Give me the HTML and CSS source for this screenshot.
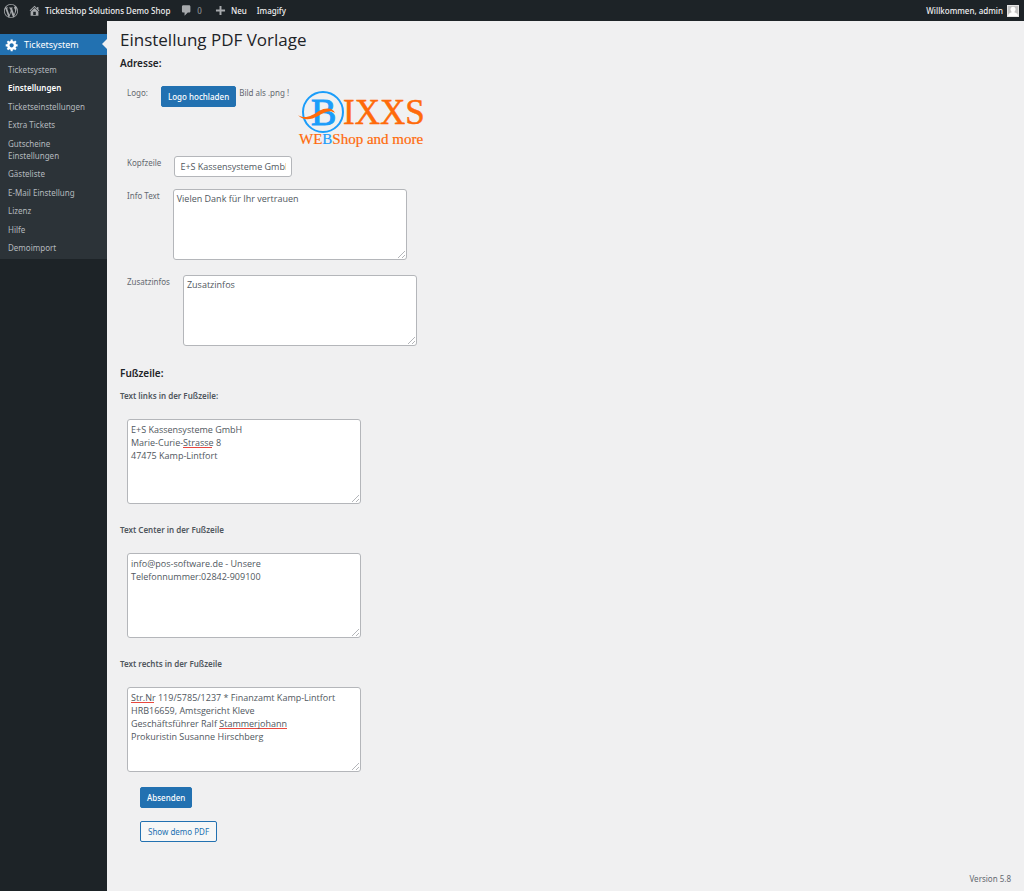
FILE: index.html
```html
<!DOCTYPE html>
<html lang="de">
<head>
<meta charset="utf-8">
<title>Einstellung PDF Vorlage</title>
<link rel="stylesheet" href="styles.css">
</head>
<body>
<header class="adminbar">
  <a class="bar-item" href="#" aria-label="WordPress">
    <svg class="icon-wp" viewBox="0 0 20 20"><path fill="currentColor" d="M20 10c0-5.51-4.49-10-10-10S0 4.49 0 10s4.480 10 10 10c5.510 0 10-4.490 10-10zM7.780 15.370L4.370 6.220c.550-.020 1.170-.080 1.170-.080.500-.060.440-1.130-.060-1.110 0 0-1.450.110-2.370.110-.180 0-.370 0-.580-.010C4.120 2.690 6.870 1.110 10 1.110c2.330 0 4.450.870 6.050 2.340-.680-.110-1.650.390-1.650 1.580 0 .740.450 1.360.900 2.100.350.610.550 1.360.550 2.460 0 1.490-1.400 5-1.400 5l-3.030-8.370c.540-.020.820-.170.820-.170.500-.050.440-1.250-.060-1.220 0 0-1.440.120-2.380.120-.870 0-2.330-.120-2.330-.120-.500-.030-.560 1.200-.060 1.220l.920.080 1.260 3.410zM17.410 10c.240-.640.740-1.870.430-4.250.700 1.290 1.050 2.710 1.050 4.250 0 3.290-1.730 6.240-4.400 7.780.970-2.590 1.940-5.200 2.920-7.780zM6.100 18.090C3.120 16.650 1.110 13.530 1.110 10c0-1.300.230-2.480.720-3.590C3.250 10.300 4.670 14.200 6.100 18.090zm4.030-6.630l2.580 6.980c-.860.290-1.760.450-2.710.450-.790 0-1.570-.110-2.290-.330.810-2.380 1.620-4.740 2.420-7.100z"/></svg>
  </a>
  <a class="bar-item" href="#">
    <svg class="icon" viewBox="0 0 20 20"><path fill="currentColor" d="M16 8.500l1.530 1.530-1.060 1.060L10 4.600l-6.470 6.490-1.060-1.060L10 2.500l4 4v-2h2v4zm-6-2.460l6 5.990V18H4v-5.970zM12 17v-5H8v5h4z"/></svg>
    <span>Ticketshop Solutions Demo Shop</span>
  </a>
  <a class="bar-item bar-count" href="#">
    <svg class="icon" viewBox="0 0 20 20"><path fill="currentColor" d="M5 2h9c1.100 0 2 .900 2 2v7c0 1.100-.900 2-2 2h-2l-5 5v-5H5c-1.100 0-2-.900-2-2V4c0-1.100.900-2 2-2z"/></svg>
    <span>0</span>
  </a>
  <a class="bar-item" href="#">
    <svg class="icon" viewBox="0 0 20 20"><path fill="currentColor" d="M8.500 3h3v5.500H17v3h-5.500V17h-3v-5.500H3v-3h5.500z"/></svg>
    <span>Neu</span>
  </a>
  <a class="bar-item" href="#">Imagify</a>
  <a class="bar-item bar-user" href="#">
    <span>Willkommen, admin</span>
    <svg class="avatar" viewBox="0 0 12 12"><rect width="12" height="12" fill="#e4e4e4"/><path fill="#c3c3c3" d="M1 1h10v10H1z"/><circle cx="6" cy="4.300" r="2.500" fill="#fff"/><path fill="#fff" d="M1 11c.300-2.500 1.800-3.300 3.500-3.600V6h3v1.400c1.700.300 3.200 1.100 3.500 3.600z"/></svg>
  </a>
</header>
<div class="layout">
  <nav class="sidebar">
    <a class="menu-top" href="#">
      <svg class="menu-icon" viewBox="0 0 20 20"><path fill="currentColor" d="M18 12h-2.180c-.170.700-.440 1.350-.810 1.930l1.540 1.540-2.100 2.100-1.540-1.540c-.580.360-1.230.630-1.910.790V19H8v-2.180c-.680-.160-1.330-.430-1.910-.790l-1.540 1.540-2.120-2.120 1.540-1.540c-.360-.580-.630-1.230-.790-1.910H1V9.030h2.170c.160-.700.440-1.350.800-1.940L2.430 5.550l2.100-2.100 1.540 1.540c.580-.370 1.240-.640 1.930-.810V2h3v2.180c.680.160 1.330.430 1.910.790l1.540-1.540 2.120 2.120-1.540 1.540c.360.590.640 1.240.800 1.940H18V12zm-8.500 1.500c1.660 0 3-1.340 3-3s-1.340-3-3-3-3 1.340-3 3 1.340 3 3 3z"/></svg>
      <span>Ticketsystem</span>
    </a>
    <ul class="submenu">
      <li><a href="#">Ticketsystem</a></li>
      <li><a class="current" href="#">Einstellungen</a></li>
      <li><a href="#">Ticketseinstellungen</a></li>
      <li><a href="#">Extra Tickets</a></li>
      <li><a href="#">Gutscheine Einstellungen</a></li>
      <li><a href="#">Gästeliste</a></li>
      <li><a href="#">E-Mail Einstellung</a></li>
      <li><a href="#">Lizenz</a></li>
      <li><a href="#">Hilfe</a></li>
      <li><a href="#">Demoimport</a></li>
    </ul>
  </nav>
  <main class="content">
    <h1>Einstellung PDF Vorlage</h1>
    <form class="form">
      <h2>Adresse:</h2>
      <div class="row row-logo">
        <label for="logo">Logo:</label>
        <div class="upload">
          <button class="button primary" type="button" id="logo">Logo hochladen</button>
          <span>Bild als .png !</span>
          <svg class="brand" viewBox="0 0 130 60" role="img" aria-label="BIXXS WEBShop and more">
            <circle cx="25" cy="22" r="20" fill="none" stroke="#1b9dfa" stroke-width="2"/>
            <text class="brand-text" x="13" y="35" font-size="38" fill="#1b9dfa" stroke="#1b9dfa">B</text>
            <path d="M0 25C7 30 15 25 21 21C28 17 35 18 37 23C31 19 26 23 20 26C13 30 5 31 0 25z" fill="#ff6a0a"/>
            <text class="brand-text" x="45" y="34" font-size="35" fill="#ff6a0a" stroke="#ff6a0a" stroke-width=".5">IXXS</text>
            <text class="brand-text" x="1" y="54" font-size="15" fill="#ff6a0a" stroke="#ff6a0a" stroke-width=".2">WE<tspan fill="#1b9dfa" stroke="#1b9dfa">B</tspan>Shop and more</text>
          </svg>
        </div>
      </div>
      <div class="row row-head">
        <label for="kopf">Kopfzeile</label>
        <input class="text" id="kopf" type="text" value="E+S Kassensysteme GmbH">
      </div>
      <div class="row row-area">
        <label for="info">Info Text</label>
        <textarea class="area small" id="info">Vielen Dank für Ihr vertrauen</textarea>
      </div>
      <div class="row row-area">
        <label for="zusatz">Zusatzinfos</label>
        <textarea class="area small" id="zusatz">Zusatzinfos</textarea>
      </div>
      <h2 class="footer-title">Fußzeile:</h2>
      <div class="block">
        <label for="links">Text links in der Fußzeile:</label>
        <textarea class="area spell-left" id="links" spellcheck="false">E+S Kassensysteme GmbH
Marie-Curie-Strasse 8
47475 Kamp-Lintfort</textarea>
      </div>
      <div class="block">
        <label for="center">Text Center in der Fußzeile</label>
        <textarea class="area" id="center" spellcheck="false">info@pos-software.de - Unsere
Telefonnummer:02842-909100</textarea>
      </div>
      <div class="block">
        <label for="rechts">Text rechts in der Fußzeile</label>
        <textarea class="area spell-right" id="rechts" spellcheck="false">Str.Nr 119/5785/1237 * Finanzamt Kamp-Lintfort
HRB16659, Amtsgericht Kleve
Geschäftsführer Ralf Stammerjohann
Prokuristin Susanne Hirschberg</textarea>
      </div>
      <div class="actions">
        <button class="button primary" type="submit">Absenden</button>
        <button class="button" type="button">Show demo PDF</button>
      </div>
    </form>
    <footer class="version">Version 5.8</footer>
  </main>
</div>
</body>
</html>
```
FILE: styles.css
```css
* { box-sizing: border-box; }
body {
  margin: 0;
  min-height: 100vh;
  display: flex;
  flex-direction: column;
  background: #f0f0f1;
  color: #646970;
  font: 8px/12px "Noto Sans", "Open Sans", sans-serif;
}
a { color: inherit; text-decoration: none; }
h1, h2, ul { margin: 0; padding: 0; }
h1, h2 { color: #1d2327; }

.adminbar {
  display: flex;
  align-items: center;
  height: 21px;
  padding: 0 4px;
  background: #1d2327;
  color: #f0f0f1;
  font-weight: 500;
  line-height: 21px;
}
.bar-item { display: flex; align-items: center; gap: 4px; margin-right: 10px; }
.bar-item svg { color: #a7aaad; }
.bar-count { margin-right: 12px; color: #8c8f94; }
.icon-wp { width: 14px; height: 14px; }
.icon { width: 13px; height: 13px; }
.bar-item.bar-user { margin: 0 0 0 auto; }
.bar-user .avatar { width: 12px; height: 12px; margin-right: 1px; }

.layout { display: flex; flex: 1; }
.sidebar { flex: 0 0 107px; padding-top: 13px; background: #1d2327; }
.menu-top {
  position: relative;
  display: flex;
  align-items: center;
  gap: 5px;
  height: 21px;
  padding-left: 5px;
  background: #2271b1;
  color: #fff;
  font-size: 9px;
}
.menu-top::after {
  content: "";
  position: absolute;
  right: 0;
  top: 5px;
  border: 5px solid transparent;
  border-left: 0;
  border-right-color: #f0f0f1;
}
.menu-icon { width: 14px; height: 14px; }
.submenu {
  display: flex;
  flex-direction: column;
  justify-content: space-between;
  min-height: 204px;
  padding: 9px 8px 5px;
  background: #2c3338;
  color: #b4b9be;
  list-style: none;
}
.submenu a { display: block; }
.submenu .current { color: #fff; font-weight: 600; }

.content { flex: 1; display: flex; flex-direction: column; padding: 6px 13px; }
h1 { font: 400 17px/26px "Open Sans", "Noto Sans", sans-serif; }
h2 { font-size: 10px; line-height: 14px; font-weight: 600; }
.form { padding-top: 3px; }
.row { display: flex; align-items: flex-start; gap: 13px; padding-left: 7px; }
.row label { padding-top: 1px; }
.row-logo { padding-top: 16px; }
.upload { display: flex; align-items: flex-start; gap: 3px; }
.upload span { padding-top: 1px; }
.brand { width: 130px; height: 60px; margin: 4px 0 0 6px; overflow: visible; }
.brand-text { font-family: "Liberation Serif", serif; }
.row-head { padding-top: 6px; }
.row-area { padding-top: 12px; }
.row-area + .row-area { padding-top: 15px; }

.button {
  min-height: 21px;
  padding: 0 7px;
  border: 1px solid #2271b1;
  border-radius: 2px;
  background: #f6f7f7;
  color: #2271b1;
  font: inherit;
}
.primary { padding: 0 6px; background: #2271b1; color: #fff; font-weight: 500; }
.text,
.area {
  border: 1px solid #b4b6ba;
  border-radius: 3px;
  background: #fff no-repeat;
  color: #50575e;
  font: 9px/13px "Open Sans", "Noto Sans", sans-serif;
}
.text {
  width: 118px;
  height: 21px;
  padding: 0 5px;
}
.area {
  display: block;
  width: 234px;
  height: 85px;
  padding: 3px;
  resize: both;
}
.area::-webkit-resizer {
  background: linear-gradient(135deg, transparent 46%, #b4b6ba 46%, #b4b6ba 56%, transparent 56%, transparent 74%, #b4b6ba 74%, #b4b6ba 84%, transparent 84%) no-repeat right 1px bottom 1px / 7px 7px;
}
.small { height: 71px; padding-top: 2px; }
.footer-title { padding-top: 20px; }
.block { display: flex; flex-direction: column; align-items: flex-start; padding-top: 10px; }
.block label { color: #50575e; font-weight: 600; }
.block .area { margin: 17px 0 0 7px; }
.block + .block { padding-top: 20px; }
.spell-left {
  background-image: linear-gradient(#e8483f, #e8483f);
  background-size: 29px 1px;
  background-position: 55px 27px;
}
.spell-right {
  background-image: linear-gradient(#e8483f, #e8483f), linear-gradient(#e8483f, #e8483f);
  background-size: 23px 1px, 68px 1px;
  background-position: 3px 14px, 91px 40px;
}
.actions { display: flex; flex-direction: column; align-items: flex-start; gap: 13px; padding: 15px 20px; }
.version { margin-top: auto; align-self: flex-end; }
```
